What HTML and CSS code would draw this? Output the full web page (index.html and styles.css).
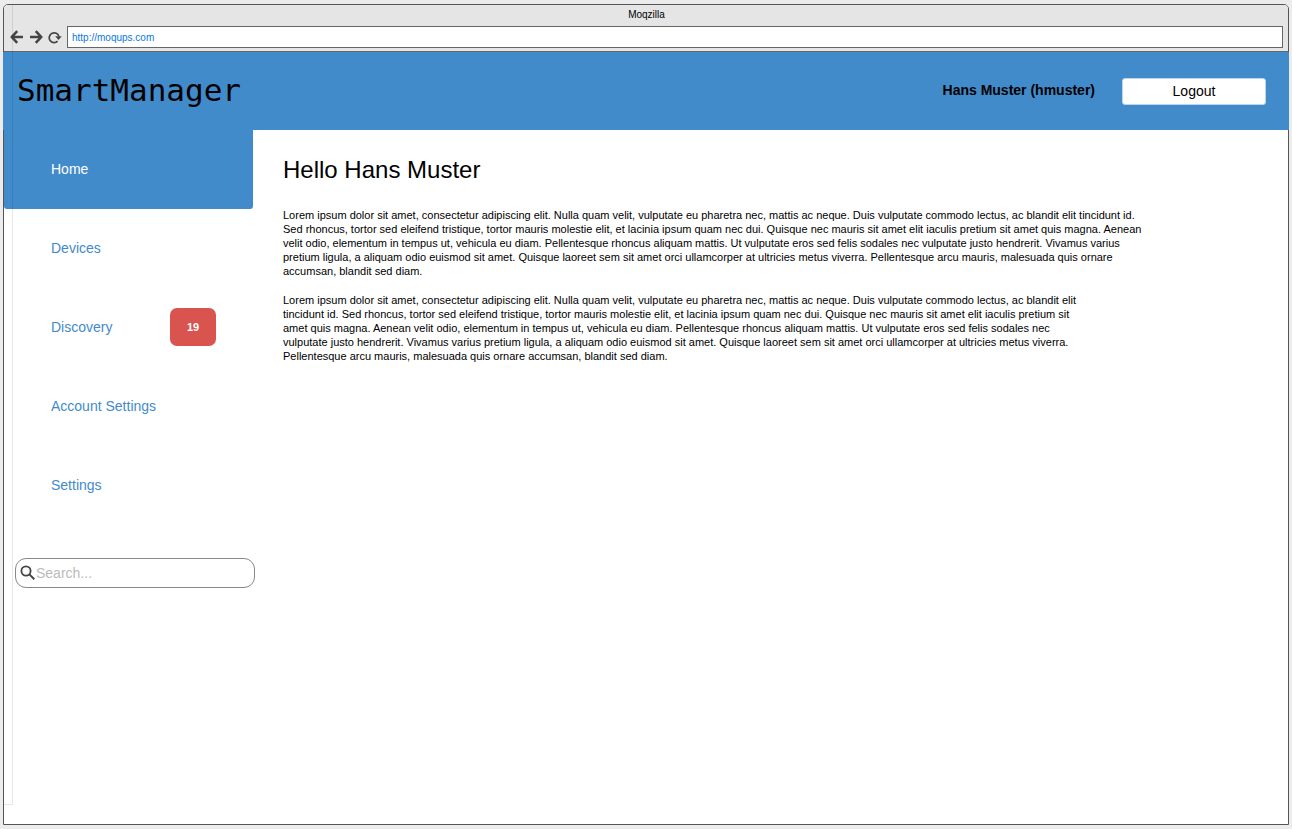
FILE: index.html
```
<!DOCTYPE html>
<html lang="en">
<head>
<meta charset="utf-8">
<title>Moqzilla</title>
<link rel="stylesheet" href="styles.css">
</head>
<body>
<div class="window">
  <div class="chrome">
    <div class="chrome-title">Moqzilla</div>
    <div class="toolbar">
      <button class="tool" type="button" aria-label="Back"><svg width="14" height="14" viewBox="0 0 14 14"><path d="M13 7H2.500M7.200 1.200 1.800 7 7.200 12.800" fill="none" stroke="#444" stroke-width="2.500"/></svg></button>
      <button class="tool" type="button" aria-label="Forward"><svg width="14" height="14" viewBox="0 0 14 14"><path d="M1 7h10.500M6.800 1.200 12.200 7 6.800 12.800" fill="none" stroke="#444" stroke-width="2.500"/></svg></button>
      <button class="tool" type="button" aria-label="Reload"><svg width="14" height="14" viewBox="0 0 14 14"><path d="M9.600 11.200A4.900 4.900 0 1 1 10.900 6.500" fill="none" stroke="#444" stroke-width="1.700"/><path d="M7.200 6.300H13.800L10.500 10Z" fill="#444"/></svg></button>
      <input class="address" type="text" value="http://moqups.com" aria-label="Address">
    </div>
  </div>
  <header class="header">
    <div class="brand">SmartManager</div>
    <div class="user">Hans Muster (hmuster)</div>
    <button class="logout" type="button">Logout</button>
  </header>
  <div class="content">
    <aside class="sidebar">
      <nav class="nav">
        <a class="nav-item active" href="#home">Home</a>
        <a class="nav-item" href="#devices">Devices</a>
        <a class="nav-item" href="#discovery">Discovery<span class="badge">19</span></a>
        <a class="nav-item" href="#account">Account Settings</a>
        <a class="nav-item" href="#settings">Settings</a>
      </nav>
      <label class="search">
        <svg width="16" height="16" viewBox="0 0 16 16"><circle cx="6" cy="6" r="4.600" fill="none" stroke="#444" stroke-width="1.800"/><path d="m9.400 9.400 4.900 4.900" stroke="#444" stroke-width="2"/></svg>
        <input class="search-input" type="text" placeholder="Search..." aria-label="Search">
      </label>
    </aside>
    <main class="main">
      <h1 class="heading">Hello Hans Muster</h1>
      <p class="text">Lorem ipsum dolor sit amet, consectetur adipiscing elit. Nulla quam velit, vulputate eu pharetra nec, mattis ac neque. Duis vulputate commodo lectus, ac blandit elit tincidunt id. Sed rhoncus, tortor sed eleifend tristique, tortor mauris molestie elit, et lacinia ipsum quam nec dui. Quisque nec mauris sit amet elit iaculis pretium sit amet quis magna. Aenean velit odio, elementum in tempus ut, vehicula eu diam. Pellentesque rhoncus aliquam mattis. Ut vulputate eros sed felis sodales nec vulputate justo hendrerit. Vivamus varius pretium ligula, a aliquam odio euismod sit amet. Quisque laoreet sem sit amet orci ullamcorper at ultricies metus viverra. Pellentesque arcu mauris, malesuada quis ornare accumsan, blandit sed diam.</p>
      <p class="text narrow">Lorem ipsum dolor sit amet, consectetur adipiscing elit. Nulla quam velit, vulputate eu pharetra nec, mattis ac neque. Duis vulputate commodo lectus, ac blandit elit tincidunt id. Sed rhoncus, tortor sed eleifend tristique, tortor mauris molestie elit, et lacinia ipsum quam nec dui. Quisque nec mauris sit amet elit iaculis pretium sit amet quis magna. Aenean velit odio, elementum in tempus ut, vehicula eu diam. Pellentesque rhoncus aliquam mattis. Ut vulputate eros sed felis sodales nec vulputate justo hendrerit. Vivamus varius pretium ligula, a aliquam odio euismod sit amet. Quisque laoreet sem sit amet orci ullamcorper at ultricies metus viverra. Pellentesque arcu mauris, malesuada quis ornare accumsan, blandit sed diam.</p>
    </main>
  </div>
</div>
</body>
</html>
```
FILE: styles.css
```
* { box-sizing: border-box; }
body {
  margin: 0;
  padding: 4px 3px;
  min-height: 100vh;
  display: flex;
  background: #ececec;
  font-family: "Liberation Sans", Arial, sans-serif;
  font-size: 14px;
  color: #000;
}
.window {
  position: relative;
  flex: 1;
  display: flex;
  flex-direction: column;
  border: 1px solid #555;
  border-radius: 5px 5px 0 0;
  background: #fff;
}
/* Guide line that runs down over the left edge of the page */
.window::after {
  content: "";
  position: absolute;
  top: 0;
  bottom: 19px;
  left: 0;
  width: 8px;
  border-right: 1px solid rgba(0, 0, 0, 0.09);
  border-bottom: 1px solid rgba(0, 0, 0, 0.09);
  pointer-events: none;
}
.chrome {
  background: #e5e5e5;
  border-bottom: 1px solid #666;
  border-radius: 4px 4px 0 0;
  padding: 4px 5px 3px 6px;
}
.chrome-title {
  font-size: 10px;
  line-height: 12px;
  text-align: center;
  margin-bottom: 5px;
}
.toolbar {
  display: flex;
  align-items: center;
  gap: 5px;
}
.tool {
  width: 14px;
  height: 14px;
  padding: 0;
  border: 0;
  background: none;
}
.tool svg { display: block; }
.address {
  flex: 1;
  min-width: 0;
  height: 22px;
  padding: 0 4px;
  border: 1px solid #666;
  background: #fff;
  font: 10px "Liberation Sans", Arial, sans-serif;
  color: #0a78e0;
}
.header {
  display: flex;
  align-items: center;
  height: 78px;
  margin: 0 -1px;
  padding: 0 23px 0 14px;
  background: #428bca;
}
.brand {
  flex: 1;
  padding-bottom: 3px;
  font: 31px "DejaVu Sans Mono", monospace;
}
.user {
  padding-bottom: 3px;
  font-weight: bold;
  margin-right: 27px;
}
.logout {
  width: 144px;
  height: 27px;
  padding: 0;
  border: 1px solid #bcd5ec;
  border-radius: 3px;
  background: #fff;
  color: #000;
  font: 14px "Liberation Sans", Arial, sans-serif;
}
.content { display: flex; flex: 1; }
.sidebar { flex: none; width: 251px; }
.nav { width: 249px; }
.nav-item {
  display: flex;
  align-items: center;
  height: 79px;
  padding: 0 37px 2px 47px;
  color: #428bca;
  text-decoration: none;
}
.active {
  background: #428bca;
  color: #fff;
  border-radius: 0 0 3px 3px;
}
.badge {
  margin-left: auto;
  width: 46px;
  border-radius: 7px;
  background: #d9534f;
  color: #fff;
  font-size: 11px;
  font-weight: bold;
  line-height: 38px;
  text-align: center;
}
.search {
  display: flex;
  align-items: center;
  height: 30px;
  margin: 33px 0 0 11px;
  padding: 0 8px 0 4px;
  border: 1px solid #888;
  border-radius: 11px;
}
.search-input {
  flex: 1;
  min-width: 0;
  padding: 0 0 1px;
  border: 0;
  outline: 0;
  background: none;
  font: 14px "Liberation Sans", Arial, sans-serif;
}
.search-input::placeholder { color: #bbb; }
.main { flex: 1; padding: 26px 28px; }
.heading {
  margin: 0 0 24px;
  font-size: 24px;
  line-height: 28px;
  font-weight: normal;
}
.text {
  max-width: 872px;
  margin: 0 0 15px;
  font-size: 11px;
  line-height: 14px;
}
.narrow { max-width: 812px; }
```
